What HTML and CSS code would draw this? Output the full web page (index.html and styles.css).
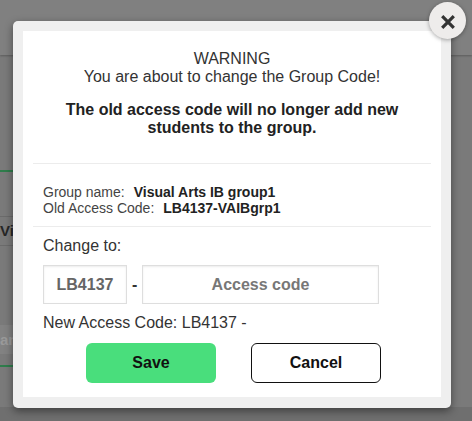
FILE: index.html
```html
<!DOCTYPE html>
<html lang="en">
<head>
<meta charset="utf-8">
<title>Change Group Code</title>
<link rel="stylesheet" href="styles.css">
</head>
<body>
<div class="page">
  <header class="topbar"></header>
  <main class="content">
    <div class="green-rule first"></div>
    <div class="row-vi">Vi</div>
    <div class="row-an">an</div>
    <div class="green-rule second"></div>
  </main>
  <footer class="foot"></footer>
</div>

<div class="dialog">
  <div class="panel">
    <div class="warning">
      <p class="warn-head">WARNING<br>You are about to change the Group Code!</p>
      <p class="warn-bold">The old access code will no longer add new<br>students to the group.</p>
    </div>
    <div class="info">
      <div class="info-line">Group name:<b class="val">Visual Arts IB group1</b></div>
      <div class="info-line">Old Access Code:<b class="val">LB4137-VAIBgrp1</b></div>
    </div>
    <div class="change">
      <div class="change-label">Change to:</div>
      <div class="code-row">
        <input class="code-box prefix" type="text" value="LB4137" readonly>
        <span class="dash">-</span>
        <input class="code-box suffix" type="text" placeholder="Access code">
      </div>
      <div class="new-code">New Access Code: LB4137 -</div>
      <div class="actions">
        <button class="btn save" type="button">Save</button>
        <button class="btn cancel" type="button">Cancel</button>
      </div>
    </div>
  </div>
  <button class="close" type="button" aria-label="Close">
    <svg width="16" height="16" viewBox="0 0 16 16"><path d="M2.2 2.2 L13.8 13.8 M13.8 2.2 L2.2 13.8" stroke="#333" stroke-width="3.2" stroke-linecap="butt" fill="none"/></svg>
  </button>
</div>
</body>
</html>
```

FILE: styles.css
```css
* { box-sizing: border-box; }
html, body { margin: 0; padding: 0; }
body {
  background: #7a7a7a;
  font-family: "Liberation Sans", Arial, sans-serif;
  color: #333;
  overflow: hidden;
}
.page {
  min-height: 100vh;
  display: flex;
  flex-direction: column;
}
.topbar {
  height: 55px;
  background: #808080;
  box-shadow: 0 1px 2px rgba(0,0,0,0.25);
  position: relative;
  z-index: 1;
}
.content {
  width: 320px;
}
.green-rule {
  height: 2px;
  background: #2f7d4c;
}
.green-rule.first { margin-top: 115px; }
.green-rule.second { margin-top: 11px; }
.row-vi {
  margin-top: 44px;
  height: 30px;
  border-top: 1px solid #6b6b6b;
  border-bottom: 1px solid #6b6b6b;
  font-weight: bold;
  font-size: 15px;
  line-height: 28px;
  color: #262626;
  white-space: nowrap;
}
.row-an {
  margin-top: 79px;
  height: 29px;
  background: #828282;
  font-weight: bold;
  font-size: 15px;
  line-height: 29px;
  color: #9a9a9a;
}
.foot {
  margin-top: auto;
  height: 14px;
  background: #6f6f6f;
}

.dialog {
  position: fixed;
  left: 13px;
  top: 21px;
  width: 438px;
  height: 387px;
  padding: 10px;
  background: #efefef;
  border-radius: 5px;
  box-shadow: 0 3px 8px rgba(0,0,0,0.45);
  z-index: 10;
}
.panel {
  background: #fff;
  height: 366px;
  padding: 19px 10px 0;
}
.warning {
  text-align: center;
  font-size: 16px;
  line-height: 18px;
  border-bottom: 1px solid #ececec;
}
.warning p { margin: 0; }
.warn-head { color: #333; }
.warn-bold {
  margin-top: 15px !important;
  margin-bottom: 26px !important;
  font-weight: bold;
  color: #222;
}
.info {
  padding: 20px 10px 10px;
  font-size: 14px;
  line-height: 16px;
  color: #444;
  border-bottom: 1px solid #ececec;
}
.val {
  margin-left: 9px;
  color: #222;
}
.change {
  padding: 10px 10px 0;
}
.change-label {
  font-size: 16px;
  line-height: 18px;
  color: #333;
}
.code-row {
  margin-top: 10px;
  display: flex;
  align-items: center;
  gap: 5px;
}
.code-box {
  height: 39px;
  border: 1px solid #dedede;
  box-shadow: inset 0 1px 2px rgba(0,0,0,0.08);
  font-family: "Liberation Sans", Arial, sans-serif;
  font-weight: bold;
  font-size: 16px;
  text-align: center;
  color: #666;
  background: #fff;
  padding: 0;
  outline: none;
}
.code-box.prefix { width: 84px; }
.code-box.suffix { width: 237px; }
.code-box::placeholder { color: #777; opacity: 1; }
.dash {
  width: 5px;
  font-weight: bold;
  font-size: 16px;
  color: #333;
}
.new-code {
  margin-top: 10px;
  font-size: 16px;
  line-height: 18px;
  color: #333;
}
.actions {
  margin-top: 11px;
  display: flex;
  gap: 35px;
  padding-left: 43px;
}
.btn {
  width: 130px;
  height: 40px;
  border-radius: 6px;
  font-family: "Liberation Sans", Arial, sans-serif;
  font-weight: bold;
  font-size: 16px;
  color: #111;
  cursor: pointer;
}
.btn.save {
  background: #49de7c;
  border: none;
}
.btn.cancel {
  background: #fff;
  border: 1px solid #111;
}
.close {
  position: absolute;
  left: 416px;
  top: -19px;
  width: 37px;
  height: 37px;
  border-radius: 50%;
  border: none;
  background: #eeeceb;
  box-shadow: 0 1px 4px rgba(0,0,0,0.35);
  display: flex;
  align-items: center;
  justify-content: center;
  padding: 0;
  padding-top: 2px;
}
.close svg { display: block; }
```
